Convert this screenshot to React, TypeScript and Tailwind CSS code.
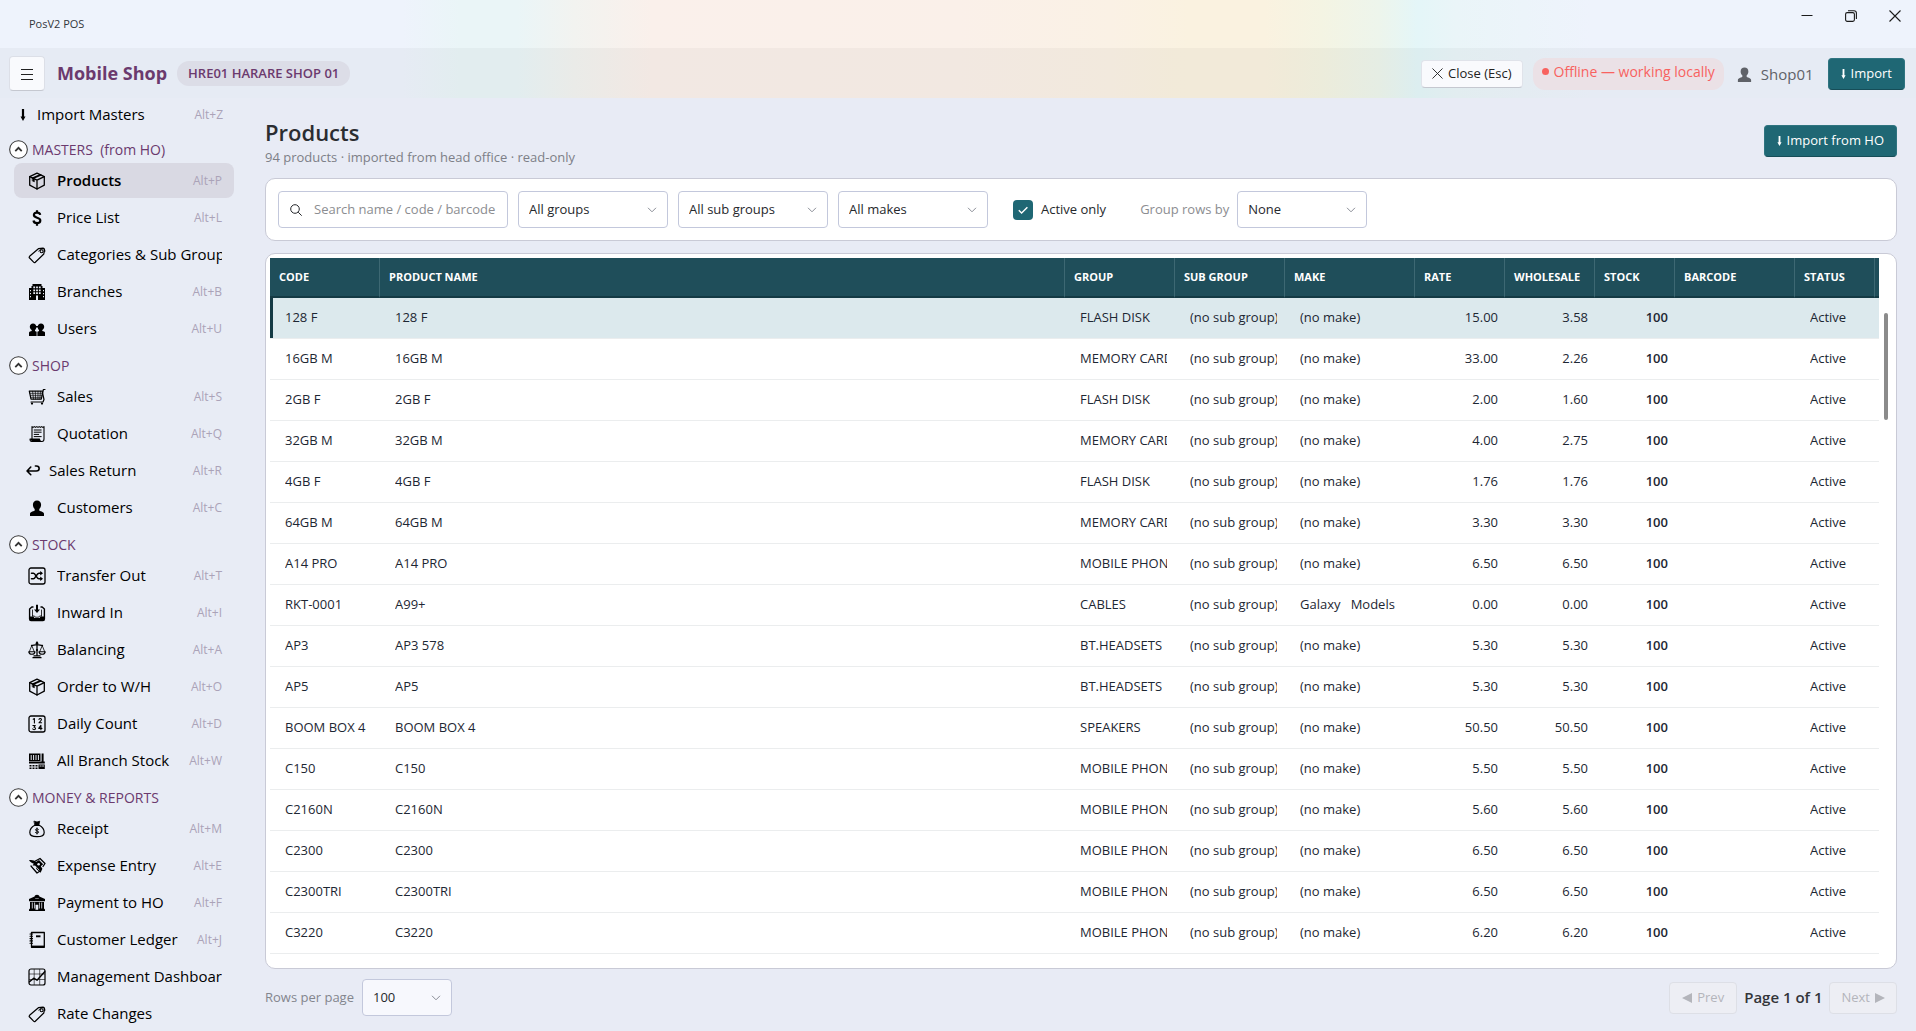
import React from "react";

type IconProps = { className?: string };

function Svg({ children, className = "size-[18px]" }: { children: React.ReactNode; className?: string }) {
  return (
    <svg
      viewBox="0 0 18 18"
      className={`${className} shrink-0`}
      fill="none"
      stroke="currentColor"
      strokeWidth="1.3"
      strokeLinejoin="round"
      strokeLinecap="round"
      aria-hidden="true"
    >
      {children}
    </svg>
  );
}

const DownArrow = ({ className = "h-[14px] w-[6px]" }: IconProps) => (
  <svg viewBox="0 0 6 14" className={`${className} shrink-0`} fill="currentColor" aria-hidden="true">
    <path d="M1.9 1h2.2v7.6h1.4L3 13 .5 8.600h1.400z" />
  </svg>
);

const Package = () => (
  <Svg>
    <path d="M9 1.200 16.300 4.600v8.600L9 17 1.700 13.200V4.600z" />
    <path d="M1.700 4.600 9 8.200l7.300-3.600M9 8.200V17" />
    <path d="M5 6.200 12.600 2.900" strokeWidth="1.800" />
    <path d="m4.500 6 1.900.900v3L4.500 9z" fill="currentColor" strokeWidth=".5" />
  </Svg>
);

const Dollar = () => (
  <Svg>
    <path
      d="M12.200 5.900C11.900 4.300 10.700 3.600 9 3.600c-1.900 0-3.100.900-3.100 2.400 0 3.500 6.400 1.900 6.400 5.400 0 1.700-1.300 2.700-3.300 2.700-2.100 0-3.300-.900-3.500-2.600M9 1.200v2.400M9 14.100v2.600"
      strokeWidth="2.200"
      strokeLinecap="butt"
    />
  </Svg>
);

const Tag = () => (
  <Svg>
    <path d="M10.400 2.700 15 2.200c.900 0 1.600.700 1.500 1.600L15.800 8 7.300 16.200c-.500.500-1.200.500-1.700 0l-4-4.200c-.500-.500-.500-1.200 0-1.700z" strokeWidth="1.200" />
    <circle cx="13.600" cy="5.200" r="1.500" strokeWidth="1.100" />
    <path d="M10.800 5.200c.800-1.500 2.300-2.500 4-2.400 1.700.1 2.500 1.400 2 3" strokeWidth=".9" />
  </Svg>
);

const Building = () => (
  <Svg>
    <path d="M4.500 1h9v2h1v2H17v12H1V5h2.500V3h1z" fill="currentColor" stroke="none" />
    <path
      d="M5.300 3.500h1.800v1.800H5.300zM8.100 3.500h1.800v1.800H8.100zM10.900 3.500h1.800v1.800h-1.800zM5.300 6.400h1.800v1.800H5.300zM8.100 6.400h1.800v1.800H8.100zM10.900 6.400h1.800v1.800h-1.800zM5.300 9.300h1.800v1.800H5.300zM8.100 9.300h1.800v1.800H8.100zM10.900 9.300h1.800v1.800h-1.800zM8 12.600h2V17H8zM2 7h1v1.200H2zM2 10h1v1.200H2zM2 13h1v1.200H2zM15 7h1v1.200h-1zM15 10h1v1.200h-1zM15 13h1v1.200h-1z"
      fill="#e8ecf5"
      stroke="none"
    />
  </Svg>
);

const UsersIcon = () => (
  <Svg>
    <g fill="currentColor" stroke="none">
      <path d="M5 3.500c2 0 3.300 1.300 3.300 3.200 0 1.400-.500 2.600-1.300 3.400v1l2 .900V16H1v-3.300c0-.700.400-1 1-1.200L3.700 11v-.900C2.800 9.300 1.800 8 1.800 6.700 1.800 4.800 3.100 3.500 5 3.500z" />
      <path d="M13 3.500c-2 0-3.300 1.300-3.300 3.200 0 1.400.500 2.600 1.300 3.400v1l-2 .900V16h8v-3.300c0-.700-.4-1-1-1.200l-1.700-.5v-.900c.9-.8 1.900-2.100 1.900-3.400 0-1.900-1.300-3.200-3.200-3.200z" />
      <path d="M7.500 6h3v1.500h-3z" />
    </g>
    <path d="M9 12.300V16" stroke="#e8ecf5" strokeWidth=".8" />
  </Svg>
);

const Cart = () => (
  <Svg>
    <path d="M17 1.500h-1.600l-2.100 9.700H3L1.300 3.200h13.400" strokeWidth="1.200" />
    <path d="M2 5.300h12.300M2.400 7.300h11.500M2.800 9.300h10.700M4.600 3.300l.9 7.800M7.300 3.300l.3 7.800M10 3.300l-.1 7.800M12.500 3.300l-.7 7.800" strokeWidth=".7" />
    <path d="M14.300 4 16 11.500l-1 2.500H3" strokeWidth="1.200" />
    <circle cx="4" cy="15.600" r="1.100" fill="currentColor" stroke="none" />
    <circle cx="14" cy="15.600" r="1.100" fill="currentColor" stroke="none" />
  </Svg>
);

const ReceiptDoc = () => (
  <Svg>
    <path d="M4 13.500V1.600l1.100.8 1.200-.8 1.200.8 1.300-.8 1.200.8 1.200-.8 1.200.8 1.200-.8 1.200.8 1.200-.8V14c0 1.500-.8 2.500-2 2.500H3.700c-1.200 0-1.700-1-1.700-2.500h9.500c0 1.500.700 2.500 2 2.500" strokeWidth="1.100" />
    <path d="M6.200 5h7M6.200 7.200h7M6.200 9.400h4.500M6.200 11.600h7" strokeWidth="1" />
    <path d="M2 14h9.500l1 2.500H4z" fill="currentColor" stroke="none" />
  </Svg>
);

const Return = () => (
  <Svg className="h-[16px] w-[16px]">
    <path d="M6.500 4.500 2.300 9l4.200 4.200M2.500 9h10.200c2 0 3.200-1.200 3.200-2.800 0-1.700-1.200-2.800-3.200-2.800h-1" strokeWidth="1.800" />
  </Svg>
);

const Person = ({ className }: IconProps) => (
  <Svg className={className}>
    <path
      d="M9 1.500c2.500 0 4.100 1.700 4.100 4.200 0 1.800-.8 3.300-1.800 4.200v1.500c0 .4 4.700 1.300 4.700 3.300V17H2v-2.300c0-2 4.700-2.900 4.700-3.300V9.900c-1-.9-1.800-2.400-1.800-4.200C4.900 3.200 6.500 1.500 9 1.500z"
      fill="currentColor"
      stroke="none"
    />
  </Svg>
);

const Shuffle = () => (
  <Svg>
    <rect x="1" y="1" width="16" height="16" rx="2" />
    <path d="M3.500 6.200h2c1.900 0 3.200 5.600 5.400 5.600h2.200M3.500 11.800h2c1.900 0 3.200-5.600 5.400-5.600h2.200" strokeWidth="1.600" />
    <path d="M12.200 4l2.800 2.200-2.800 2.200zM12.200 9.600l2.800 2.200-2.800 2.200z" fill="currentColor" stroke="none" />
  </Svg>
);

const Inbox = () => (
  <Svg>
    <path d="M5 3H3.800L1.600 5v10c0 1 .5 1.500 1.400 1.500h12c.9 0 1.400-.5 1.400-1.500V5l-2.200-2H13" strokeWidth="1.400" />
    <path d="M2 12.500h3.500l1 1.500h5l1-1.500H16V16H2z" fill="currentColor" stroke="none" />
    <path d="M4.500 12V6M13.500 12V6M4.500 12h2l.8 1.200h3.400l.8-1.200h2" strokeWidth=".8" />
    <path d="M8 .8h2v4.700h2L9 9 6 5.500h2z" fill="currentColor" stroke="none" />
  </Svg>
);

const Scales = () => (
  <Svg>
    <path d="M9 1v13M3.500 4.500c2 0 3-.8 5.500-.8s3.500.8 5.500.8M5 16.700h8M6 14.900h6" strokeWidth="1.300" />
    <path d="M3.800 4.600 1.200 11M3.800 4.600 6.400 11M14.200 4.600 11.600 11M14.200 4.600 16.800 11" strokeWidth=".8" />
    <path d="M.8 10.800h6.200c-.3 1.700-1.400 2.500-3.100 2.500s-2.800-.8-3.100-2.500zM11 10.800h6.200c-.3 1.700-1.400 2.500-3.100 2.500s-2.800-.8-3.100-2.500z" strokeWidth="1.100" />
    <circle cx="9" cy="2.200" r="1.300" fill="currentColor" stroke="none" />
    <circle cx="9" cy="9" r="1.100" fill="currentColor" stroke="none" />
  </Svg>
);

const Numbers = () => (
  <Svg>
    <rect x="1" y="1" width="16" height="16" rx="2" />
    <path
      d="M5.200 4.200 6.400 3.500V8M11 4.400c.4-1.200 2.600-1.100 2.400.3-.1.900-1.700 1.900-2.400 3.100h2.600M4.900 10.500h2.400L6 12.200c2 .1 1.900 2.500.1 2.500-.7 0-1.200-.3-1.400-.8M12.900 14.700v-4.300l-2.200 3h3.200"
      strokeWidth="1.100"
    />
  </Svg>
);

const Factory = () => (
  <Svg>
    <path d="M1 1.500h11.500V9H1z" fill="currentColor" stroke="none" />
    <path d="M3.200 3v5M5.600 3v5M8 3v5M10.400 3v5" stroke="#e8ecf5" strokeWidth="1" strokeLinecap="butt" />
    <path d="M13.600 1.500h2v8h-2zM1 9.500h15.800v2H1z" fill="currentColor" stroke="none" />
    <path d="M1.500 13h2v1.500h-2zM4.500 13h2v1.500h-2zM7.500 13h2v1.500h-2zM10.500 12.500h6.300V17h-6.300zM1.500 15.500h2V17h-2zM4.500 15.500h2V17h-2zM7.500 15.500h2V17h-2z" fill="currentColor" stroke="none" />
    <path d="M12 14h1.200M14.500 14h1.200" stroke="#e8ecf5" strokeWidth=".9" />
  </Svg>
);

const MoneyBag = () => (
  <Svg>
    <path d="M6.800 5.300h4.400c3 1.600 5 4.400 5 7.100 0 2.700-2.200 4.300-7.200 4.300s-7.200-1.600-7.200-4.300c0-2.700 2-5.500 5-7.100z" strokeWidth="1.200" />
    <path d="M6.300 1.200 9 2l2.700-.8-.9 4.100H7.200z" fill="currentColor" strokeWidth=".8" />
    <path d="M10.500 9.400c-.6-.9-3-.8-3 .5 0 1.400 3.100.7 3.100 2.200 0 1.300-2.500 1.400-3.200.4M9 8v6" strokeWidth="1" />
  </Svg>
);

const MoneyWings = () => (
  <Svg>
    <path d="M6.500 4.500 12 1.500l5 5-2 3M3 9l6 7 3-2" strokeWidth="1.300" />
    <path d="M1 3.200c3-.6 5.500.200 7 1.800l3-2 4.200 4.300-2.400 1.900 1.600 2.600-1.800 4-4.200-3.600-.6-3L4.500 8.300l1.400-1.600C4.300 6.100 2.200 5.200 1 3.200z" fill="currentColor" stroke="none" />
    <circle cx="10.600" cy="7.200" r="1.300" fill="#e8ecf5" stroke="none" />
    <path d="M5 9.500 9.400 14M7 8.700l4 4.300" stroke="#e8ecf5" strokeWidth=".8" />
  </Svg>
);

const Bank = () => (
  <Svg>
    <path d="M9 .8c1.500 0 2.200.8 2.400 1.700L17 5v2.300H1V5l5.600-2.500C6.800 1.600 7.500.8 9 .8zM2 8h14v6.500l1 1V17H1v-1.500l1-1z" fill="currentColor" stroke="none" />
    <path d="M4.300 8.500v6M13.700 8.500v6M6.600 8.500v6M11.400 8.500v6" stroke="#e8ecf5" strokeWidth=".8" strokeLinecap="butt" />
    <path d="M8 11h2v4.500H8zM7.600 4.500h2.800" fill="#e8ecf5" stroke="#e8ecf5" strokeWidth=".5" />
  </Svg>
);

const Ledger = () => (
  <Svg>
    <path d="M3.500 1.500h12.800v14.800H3.500z" strokeWidth="1.300" />
    <path d="M3.500 14.600h12.800v1.900H3.500z" fill="currentColor" stroke="none" />
    <path d="M2 3h2.500M2 5.300h2.500M2 7.600h2.500M2 9.900h2.500M2 12.200h2.500" strokeWidth="1.100" />
    <path d="M8 5.300h4.500" strokeWidth="1.900" strokeLinecap="butt" />
  </Svg>
);

const Chart = () => (
  <Svg>
    <rect x="1" y="1" width="16" height="16" rx="2" strokeWidth="1.200" />
    <path d="M1.500 6h15M1.500 11.500h15M6.200 1.500v15M11.700 1.500v15" strokeWidth=".6" />
    <path d="m1.500 13.800 4.200-3.600 3.300 2 7.700-8.400" strokeWidth="1.400" />
  </Svg>
);

type NavEntry = { label: string; key?: string; icon: () => React.ReactElement; active?: boolean; narrow?: boolean };

const sections: { title: string; items: NavEntry[] }[] = [
  {
    title: "MASTERS  (from HO)",
    items: [
      { label: "Products", key: "Alt+P", icon: Package, active: true },
      { label: "Price List", key: "Alt+L", icon: Dollar },
      { label: "Categories & Sub Groups", icon: Tag },
      { label: "Branches", key: "Alt+B", icon: Building },
      { label: "Users", key: "Alt+U", icon: UsersIcon },
    ],
  },
  {
    title: "SHOP",
    items: [
      { label: "Sales", key: "Alt+S", icon: Cart },
      { label: "Quotation", key: "Alt+Q", icon: ReceiptDoc },
      { label: "Sales Return", key: "Alt+R", icon: Return, narrow: true },
      { label: "Customers", key: "Alt+C", icon: Person },
    ],
  },
  {
    title: "STOCK",
    items: [
      { label: "Transfer Out", key: "Alt+T", icon: Shuffle },
      { label: "Inward In", key: "Alt+I", icon: Inbox },
      { label: "Balancing", key: "Alt+A", icon: Scales },
      { label: "Order to W/H", key: "Alt+O", icon: Package },
      { label: "Daily Count", key: "Alt+D", icon: Numbers },
      { label: "All Branch Stock", key: "Alt+W", icon: Factory },
    ],
  },
  {
    title: "MONEY & REPORTS",
    items: [
      { label: "Receipt", key: "Alt+M", icon: MoneyBag },
      { label: "Expense Entry", key: "Alt+E", icon: MoneyWings },
      { label: "Payment to HO", key: "Alt+F", icon: Bank },
      { label: "Customer Ledger", key: "Alt+J", icon: Ledger },
      { label: "Management Dashboard", icon: Chart },
      { label: "Rate Changes", icon: Tag },
    ],
  },
];

const NO_SUB = "(no sub group)";
const NO_MAKE = "(no make)";
const PHONES = "MOBILE PHONES";

const rows: string[][] = [
  ["128 F", "128 F", "FLASH DISK", NO_MAKE, "15.00", "3.58"],
  ["16GB M", "16GB M", "MEMORY CARD", NO_MAKE, "33.00", "2.26"],
  ["2GB F", "2GB F", "FLASH DISK", NO_MAKE, "2.00", "1.60"],
  ["32GB M", "32GB M", "MEMORY CARD", NO_MAKE, "4.00", "2.75"],
  ["4GB F", "4GB F", "FLASH DISK", NO_MAKE, "1.76", "1.76"],
  ["64GB M", "64GB M", "MEMORY CARD", NO_MAKE, "3.30", "3.30"],
  ["A14 PRO", "A14 PRO", PHONES, NO_MAKE, "6.50", "6.50"],
  ["RKT-0001", "A99+", "CABLES", "Galaxy   Models", "0.00", "0.00"],
  ["AP3", "AP3 578", "BT.HEADSETS", NO_MAKE, "5.30", "5.30"],
  ["AP5", "AP5", "BT.HEADSETS", NO_MAKE, "5.30", "5.30"],
  ["BOOM BOX 4", "BOOM BOX 4", "SPEAKERS", NO_MAKE, "50.50", "50.50"],
  ["C150", "C150", PHONES, NO_MAKE, "5.50", "5.50"],
  ["C2160N", "C2160N", PHONES, NO_MAKE, "5.60", "5.60"],
  ["C2300", "C2300", PHONES, NO_MAKE, "6.50", "6.50"],
  ["C2300TRI", "C2300TRI", PHONES, NO_MAKE, "6.50", "6.50"],
  ["C3220", "C3220", PHONES, NO_MAKE, "6.20", "6.20"],
];

const columns = [
  { title: "CODE", width: "w-[110px]" },
  { title: "PRODUCT NAME", width: "" },
  { title: "GROUP", width: "w-[110px]" },
  { title: "SUB GROUP", width: "w-[110px]" },
  { title: "MAKE", width: "w-[130px]" },
  { title: "RATE", width: "w-[90px]" },
  { title: "WHOLESALE", width: "w-[90px]" },
  { title: "STOCK", width: "w-[80px]" },
  { title: "BARCODE", width: "w-[120px]" },
  { title: "STATUS", width: "w-[80px]" },
];

function Select({ label, value, className, soft = false }: { label: string; value: string; className: string; soft?: boolean }) {
  return (
    <div className={`relative h-[37px] ${className}`}>
      <select
        aria-label={label}
        defaultValue={value}
        className={`size-full appearance-none rounded border border-[#c3c8dc] pr-8 pl-[10px] text-[13px] text-[#26282c] ${soft ? "bg-[#f7f8fd]" : "bg-white"}`}
      >
        <option>{value}</option>
      </select>
      <svg viewBox="0 0 10 6" className="pointer-events-none absolute top-4 right-[11px] h-[6px] w-[10px]" fill="none" stroke="#8a8d96" aria-hidden="true">
        <path d="m1 .8 4 4 4-4" />
      </svg>
    </div>
  );
}

function NavItem({ item }: { item: NavEntry }) {
  const Icon = item.icon;
  return (
    <a
      href="#"
      className={`my-px mr-[16px] ml-[14px] flex h-[35px] items-center rounded-lg pr-3 text-black ${item.narrow ? "pl-[11px]" : "pl-[14px]"} ${item.active ? "bg-[#d9d9e3] font-semibold" : ""}`}
    >
      <Icon />
      <span className={`min-w-0 flex-1 overflow-hidden text-[15px] whitespace-nowrap ${item.narrow ? "ml-2" : "ml-[11px]"}`}>{item.label}</span>
      {item.key && <span className="shrink-0 text-[12px] font-normal text-[#aba3b8]">{item.key}</span>}
    </a>
  );
}

function Sidebar() {
  return (
    <nav className="w-[250px] shrink-0 overflow-hidden bg-[#e8ecf5]">
      <a href="#" className="flex h-[33px] items-center pr-[27px] pl-5 text-black">
        <DownArrow />
        <span className="ml-[11px] flex-1 text-[15px]">Import Masters</span>
        <span className="text-[12px] text-[#aba3b8]">Alt+Z</span>
      </a>
      {sections.map((section) => (
        <section key={section.title} className="flex flex-col">
          <button type="button" className="flex h-[31px] items-center pt-[5px] pl-[9px] text-[14px] text-[#6b3a6e]">
            <svg viewBox="0 0 20 20" className="mr-1 size-[19px]" aria-hidden="true">
              <circle cx="10" cy="10" r="9.300" fill="#fff" stroke="#333" strokeWidth="1.100" />
              <path d="m6.600 11.600 3.400-3.400 3.400 3.400" fill="none" stroke="#333" strokeWidth="1.900" />
            </svg>
            <span className="whitespace-pre">{section.title}</span>
          </button>
          {section.items.map((item) => (
            <NavItem key={item.label} item={item} />
          ))}
        </section>
      ))}
    </nav>
  );
}

function TitleBar() {
  return (
    <div className="flex h-12 shrink-0 justify-between">
      <span className="self-center pt-px pl-[29px] text-[11px] text-[#33363b]">PosV2 POS</span>
      <div className="flex h-8 items-center gap-8 pr-[15px] text-[#1b1b1b]">
        <button type="button" aria-label="Minimize">
          <svg viewBox="0 0 12 12" className="size-[12px]" stroke="currentColor" fill="none">
            <path d="M.5 5.500h11" />
          </svg>
        </button>
        <button type="button" aria-label="Restore">
          <svg viewBox="0 0 12 12" className="size-[12px]" stroke="currentColor" fill="none" strokeWidth="1.100">
            <rect x=".6" y="2.600" width="8.800" height="8.800" rx="1.600" />
            <path d="M3 .7h6c1.400 0 2.400 1 2.400 2.400v5.800" />
          </svg>
        </button>
        <button type="button" aria-label="Close window">
          <svg viewBox="0 0 12 12" className="size-[12px]" stroke="currentColor" fill="none" strokeWidth="1.100">
            <path d="m.5.500 11 11m0-11-11 11" />
          </svg>
        </button>
      </div>
    </div>
  );
}

const tealButton =
  "flex h-8 items-center gap-[5px] rounded border border-[#2f7480] border-b-[#164d58] bg-[#1f6774] px-3 text-[13px] text-white";

function Header() {
  return (
    <header className="flex h-[50px] shrink-0 items-center bg-[#000]/[0.03] pt-px pr-[11px] pl-[9px]">
      <button type="button" aria-label="Toggle menu" className="flex h-[35px] w-9 items-center justify-center rounded border border-[#dcdfe7] border-b-[#c5c8d0] bg-[#f9fafd] text-[#222]">
        <svg viewBox="0 0 12 12" className="size-[12px]" stroke="currentColor" aria-hidden="true">
          <path d="M0 1.500h12M0 6.500h12M0 11.500h12" />
        </svg>
      </button>
      <span className="ml-3 text-[18px] font-bold text-[#6b3a6e]">Mobile Shop</span>
      <span className="ml-[10px] flex h-[25px] items-center rounded-xl bg-[#dcdde7] px-[11px] text-[13px] font-semibold text-[#6b3a6e]">
        HRE01 HARARE SHOP 01
      </span>
      <div className="flex-1" />
      <button type="button" className="flex h-7 items-center gap-[5px] rounded border border-[#e0e3ea] border-b-[#c5c8d0] bg-[#f9fafd] px-[10px] text-[13px] text-[#222]">
        <svg viewBox="0 0 12 12" className="size-[11px]" stroke="currentColor" fill="none" aria-hidden="true">
          <path d="m.5.500 11 11m0-11-11 11" />
        </svg>
        Close (Esc)
      </button>
      <span className="ml-[10px] flex h-8 items-center rounded-xl bg-[#ebe1e6] px-[9px] pb-[5px] text-[14px] text-[#f8625f]">
        <span className="mr-[5px] size-[7px] rounded-full bg-[#f8625f]" />
        Offline — working locally
      </span>
      <span className="ml-3 flex items-center gap-2 pt-px text-[15px] text-[#5f6268]">
        <Person className="size-[17px]" />
        Shop01
      </span>
      <button type="button" className={`ml-[14px] ${tealButton}`}>
        <DownArrow className="h-[12px] w-[5px]" />
        Import
      </button>
    </header>
  );
}

function Filters() {
  return (
    <div className="mt-[12px] flex h-[63px] shrink-0 items-center rounded-[10px] border border-[#c9cad6] bg-white px-3">
      <label className="flex h-[37px] w-[230px] items-center rounded border border-[#c3c8dc] pr-[9px] pl-[11px]">
        <svg viewBox="0 0 12 12" className="size-[12px] shrink-0" stroke="#26282c" fill="none" aria-hidden="true">
          <circle cx="5" cy="5" r="4.300" />
          <path d="m8.200 8.200 3.500 3.500" />
        </svg>
        <input
          type="text"
          aria-label="Search products"
          placeholder="Search name / code / barcode"
          className="ml-3 min-w-0 flex-1 bg-transparent text-[13px] outline-none placeholder:text-[#8c8d91]"
        />
      </label>
      <Select label="Group" value="All groups" className="ml-[10px] w-[150px]" />
      <Select label="Sub group" value="All sub groups" className="ml-[10px] w-[150px]" />
      <Select label="Make" value="All makes" className="ml-[10px] w-[150px]" />
      <label className="ml-[25px] flex items-center gap-2 text-[13px] text-[#26282c]">
        <span className="relative size-5">
          <input type="checkbox" defaultChecked className="block size-5 appearance-none rounded bg-[#1f6774]" />
          <svg viewBox="0 0 20 20" className="pointer-events-none absolute inset-0 size-5" fill="none" stroke="#fff" strokeWidth="1.400" aria-hidden="true">
            <path d="m5.800 10.300 2.800 2.800 5.800-5.800" />
          </svg>
        </span>
        Active only
      </label>
      <span className="ml-[34px] text-[13px] text-[#8c8d91]">Group rows by</span>
      <Select label="Group rows by" value="None" className="ml-2 w-[130px]" />
    </div>
  );
}

function Cell({ children, className = "pr-2" }: { children?: React.ReactNode; className?: string }) {
  return (
    <td className={`border-b border-[#ebedee] py-0 pl-[15px] ${className}`}>
      <div className="overflow-hidden whitespace-pre">{children}</div>
    </td>
  );
}

function ProductTable() {
  return (
    <div className="mt-[12px] flex min-h-0 flex-1 overflow-hidden rounded-[10px] border border-[#c9cad6] bg-white pt-1 pr-2 pl-1">
      <div className="min-w-0 flex-1">
        <table className="w-full table-fixed border-separate border-spacing-0 text-[13px] text-[#1d2733]">
          <colgroup>
            {columns.map((c) => (
              <col key={c.title} className={c.width} />
            ))}
            <col className="w-[4px]" />
          </colgroup>
          <thead>
            <tr className="h-10 bg-[#1f4e5a] text-left text-[11px] text-white">
              {columns.map((c) => (
                <th key={c.title} className="border-r border-b-2 border-r-[#3d6873] border-b-[#143a44] p-0 pl-[9px] font-bold whitespace-nowrap">
                  {c.title}
                </th>
              ))}
              <th className="border-b-2 border-[#143a44] p-0" />
            </tr>
          </thead>
          <tbody>
            {rows.map(([code, name, group, make, rate, wholesale], i) => (
              <tr key={code} className={`h-[41px] ${i === 0 ? "bg-[#dce9ed]" : ""}`}>
                <Cell className={i === 0 ? "pr-2 shadow-[inset_3px_0_0_#143a44]" : "pr-2"}>{code}</Cell>
                <Cell>{name}</Cell>
                <Cell>{group}</Cell>
                <Cell>{NO_SUB}</Cell>
                <Cell>{make}</Cell>
                <Cell className="pr-[7px] text-right">{rate}</Cell>
                <Cell className="pr-[7px] text-right">{wholesale}</Cell>
                <Cell className="pr-[7px] text-right font-semibold">100</Cell>
                <Cell />
                <Cell>Active</Cell>
                <td className="border-b border-[#ebedee] p-0" />
              </tr>
            ))}
          </tbody>
        </table>
      </div>
      <div className="mt-[55px] ml-[5px] h-[107px] w-1 rounded-full bg-[#8b8b8b]" />
    </div>
  );
}

function Footer() {
  return (
    <div className="flex h-[62px] shrink-0 items-center pb-[5px] text-[13px]">
      <span className="text-[#83858d]">Rows per page</span>
      <Select label="Rows per page" value="100" className="ml-2 w-[90px]" soft />
      <div className="flex-1" />
      <button type="button" disabled className="flex h-8 items-center gap-[5px] rounded border border-[#dddfe6] bg-[#edeef4] px-3 text-[#b4b5bb]">
        <svg viewBox="0 0 10 10" className="size-[10px]" fill="currentColor" aria-hidden="true">
          <path d="M10 0v10L0 5z" />
        </svg>
        Prev
      </button>
      <span className="mx-[7px] text-[15px] font-semibold text-[#333539]">Page 1 of 1</span>
      <button type="button" disabled className="flex h-8 items-center gap-[5px] rounded border border-[#dddfe6] bg-[#edeef4] px-[11px] text-[#b4b5bb]">
        Next
        <svg viewBox="0 0 10 10" className="size-[10px]" fill="currentColor" aria-hidden="true">
          <path d="M0 0v10l10-5z" />
        </svg>
      </button>
    </div>
  );
}

export default function App() {
  return (
    <div className="flex h-screen flex-col overflow-hidden bg-[#e8ebf5] font-['Open_Sans','Noto_Sans',sans-serif]">
      <div className="shrink-0 bg-[linear-gradient(90deg,#eef3fc_21%,#eaf5f7_24%,#eaf5f7_27%,#f2f3f0_30%,#faf0eb_34%,#faf0e9_50%,#faf1e5_58%,#faf2e0_62%,#faf2e0_66%,#f4f4e3_69%,#edf5ec_72%,#e4f6f8_74%,#eaf5f8_76%,#eef3fc_83%)]">
        <TitleBar />
        <Header />
      </div>
      <div className="flex min-h-0 flex-1">
        <Sidebar />
        <main className="flex min-w-0 flex-1 flex-col pt-[18px] pr-[19px] pl-[15px]">
          <div className="flex h-[50px] shrink-0 items-start justify-between">
            <div>
              <h1 className="text-[22px] leading-[32px] font-semibold text-[#2b2d31]">Products</h1>
              <p className="text-[13px] leading-[18px] text-[#7d7f87]">94 products · imported from head office · read-only</p>
            </div>
            <button type="button" className={`mt-[9px] ${tealButton}`}>
              <DownArrow className="h-[12px] w-[5px]" />
              Import from HO
            </button>
          </div>
          <Filters />
          <ProductTable />
          <Footer />
        </main>
      </div>
    </div>
  );
}
